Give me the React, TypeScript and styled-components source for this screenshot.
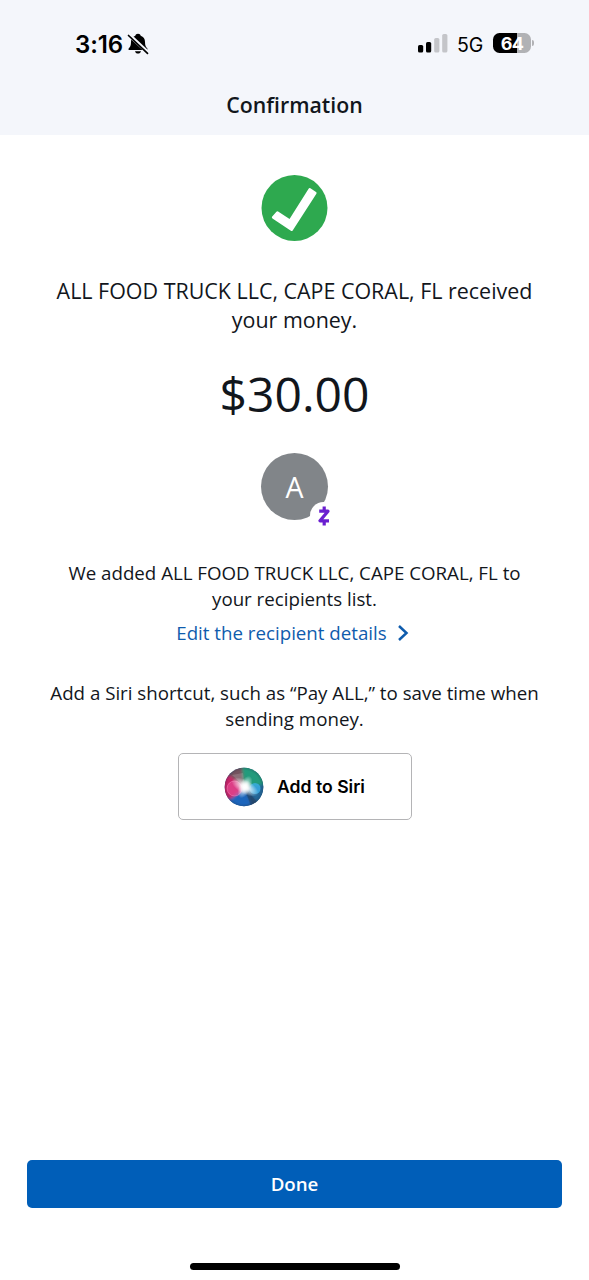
import React from "react";
import styled, { createGlobalStyle } from "styled-components";

const GlobalStyle = createGlobalStyle`
  *, *::before, *::after { box-sizing: border-box; }
  body { margin: 0; background: #fff; }
  button { font: inherit; border: 0; padding: 0; background: none; cursor: pointer; }
  p, h1 { margin: 0; }
  svg { display: block; flex: none; }
`;

const Screen = styled.div`
  width: 589px;
  height: 1280px;
  margin: 0 auto;
  display: flex;
  flex-direction: column;
  overflow: hidden;
  background: #fff;
  color: #12161c;
  font-family: "Open Sans", sans-serif;
`;

const Header = styled.header`
  height: 135px;
  background: #f4f6fb;
  display: flex;
  flex-direction: column;
  flex: none;
`;

const StatusBar = styled.div`
  height: 88px;
  padding: 0 55px 0 75px;
  display: flex;
  align-items: center;
  justify-content: space-between;
  font-family: Inter, sans-serif;
  color: #000;
`;

const StatusGroup = styled.div<{ $gap: number }>`
  display: flex;
  align-items: center;
  gap: ${(p) => p.$gap}px;
`;

const Clock = styled.span`
  font-size: 24px;
  font-weight: 600;
  line-height: 30px;
  letter-spacing: -0.1px;
  padding-top: 1px;
`;

const Network = styled.span`
  font-size: 19.5px;
  line-height: 24px;
  letter-spacing: -0.2px;
  padding: 1px 1px 0 0;
`;

const Battery = styled.div`
  display: flex;
  align-items: center;
  gap: 1px;
  padding-bottom: 2px;
`;

const BatteryBody = styled.div`
  width: 38px;
  height: 20px;
  border-radius: 6.5px;
  background: linear-gradient(to right, #000 64%, #b1b2b5 64%);
  color: #fff;
  font-size: 18px;
  font-weight: 650;
  line-height: 21px;
  letter-spacing: -0.8px;
  text-align: center;
`;

const BatteryTip = styled.div`
  width: 2px;
  height: 6px;
  border-radius: 0 3px 3px 0;
  background: #b1b2b5;
`;

const Title = styled.h1`
  font-size: 21.3px;
  font-weight: 550;
  line-height: 34px;
  text-align: center;
`;

const Content = styled.main`
  flex: 1;
  display: flex;
  flex-direction: column;
  align-items: center;
  padding-top: 40px;
  text-align: center;
`;

const Message = styled.p`
  margin-top: 34px;
  font-size: 21.45px;
  line-height: 29px;
  white-space: nowrap;
`;

const Amount = styled.p`
  margin-top: 27px;
  font-size: 48px;
  line-height: 66px;
`;

const AvatarWrap = styled.div`
  position: relative;
  margin-top: 26px;
  width: 67px;
  height: 67px;
`;

const Avatar = styled.div`
  width: 67px;
  height: 67px;
  border-radius: 50%;
  background: #818589;
  color: #fff;
  font-size: 28.5px;
  line-height: 68px;
`;

const AvatarBadge = styled.div`
  position: absolute;
  left: 49px;
  top: 49px;
  width: 27px;
  height: 27px;
  border-radius: 50%;
  background: #fff;
  display: flex;
  align-items: center;
  justify-content: center;
`;

const Note = styled.p<{ $top: number }>`
  margin-top: ${(p) => p.$top}px;
  font-size: 18.72px;
  line-height: 26px;
  white-space: nowrap;
`;

const EditLink = styled.button`
  margin: 8px 0 0 -4px;
  display: flex;
  align-items: center;
  gap: 10px;
  color: #0f5cad;
  font-size: 18.7px;
  line-height: 26px;
`;

const SiriButton = styled.button`
  margin-top: 21px;
  width: 234px;
  height: 67px;
  border: 1.5px solid #b4b4b6;
  border-radius: 5px;
  display: flex;
  align-items: center;
  justify-content: center;
  gap: 13px;
  color: #000;
  font-family: Inter, sans-serif;
  font-size: 17.6px;
  font-weight: 600;
`;

const Footer = styled.footer`
  flex: none;
  display: flex;
  flex-direction: column;
  align-items: center;
  padding: 0 27px 10.5px;
`;

const DoneButton = styled.button`
  width: 100%;
  height: 48px;
  border-radius: 5px;
  background: #005eb8;
  color: #fff;
  font-size: 18.7px;
  font-weight: 550;
`;

const HomeIndicator = styled.div`
  margin-top: 55px;
  width: 210px;
  height: 7px;
  border-radius: 4px;
  background: #000;
`;

const MutedBell = () => (
  <svg width="22" height="22" viewBox="0 0 22 22">
    <path
      d="M11 .8C9.500 .8 8.500 1.700 8.300 2.800 5.500 3.800 4 6 4 9c0 3.700-.8 4.800-2.200 6.200-.7.8-.3 1.900.7 1.900h17c1 0 1.400-1.100.7-1.900C18.800 13.800 18 12.700 18 9c0-3-1.500-5.200-4.300-6.200-.2-1.100-1.200-2-2.700-2zM8 18.300c.4 1.500 1.500 2.300 3 2.300s2.600-.8 3-2.300z"
      fill="#000"
    />
    <path d="M1.800 1.600 20.800 19.400" stroke="#f4f6fb" strokeWidth="3.600" />
    <path d="M1.500 2.500 20.500 20.300" stroke="#000" strokeWidth="1.700" strokeLinecap="round" />
  </svg>
);

const Signal = () => (
  <svg width="30" height="20" viewBox="0 0 30 20">
    <rect x="0" y="11" width="5.200" height="7.500" rx="1.600" fill="#000" />
    <rect x="8" y="8" width="5.200" height="10.500" rx="1.600" fill="#000" />
    <rect x="16.200" y="4" width="5.200" height="14.500" rx="1.600" fill="#c4c5c9" />
    <rect x="24.200" y="0" width="5.200" height="18.500" rx="1.600" fill="#c4c5c9" />
  </svg>
);

const SuccessMark = () => (
  <svg width="67" height="67" viewBox="0 0 67 67">
    <circle cx="33.500" cy="33" r="33" fill="#2ea94f" />
    <path
      d="M16.400 37.600 29 45.800 48.700 14.400 54.300 18 30.600 54.700 12.200 42.300z"
      fill="#fff"
      stroke="#fff"
      strokeWidth="2.600"
      strokeLinejoin="round"
    />
  </svg>
);

const ZelleMark = () => (
  <svg width="14" height="20" viewBox="0 0 14 20">
    <path
      d="M2.200 5.200H11L3 14.800h9M7.200 .5V5M7.200 15v4.500"
      fill="none"
      stroke="#6a1fd0"
      strokeWidth="3.200"
      strokeLinejoin="round"
    />
  </svg>
);

const Chevron = () => (
  <svg width="12" height="18" viewBox="0 0 12 18">
    <path d="M2 2l7.500 7L2 16" fill="none" stroke="#0f5cad" strokeWidth="2.500" />
  </svg>
);

const SiriOrb = () => (
  <svg width="40" height="40" viewBox="0 0 40 40">
    <defs>
      <clipPath id="orb"><circle cx="20" cy="20" r="19.300" /></clipPath>
      <radialGradient id="glow">
        <stop offset="0" stopColor="#fff" />
        <stop offset=".25" stopColor="#fff" stopOpacity=".85" />
        <stop offset="1" stopColor="#fff" stopOpacity="0" />
      </radialGradient>
      <radialGradient id="rim">
        <stop offset=".85" stopColor="#20304a" stopOpacity="0" />
        <stop offset="1" stopColor="#20304a" stopOpacity=".25" />
      </radialGradient>
      <filter id="soft" x="-30%" y="-30%" width="160%" height="160%">
        <feGaussianBlur stdDeviation="1.500" />
      </filter>
    </defs>
    <g clipPath="url(#orb)">
      <rect width="40" height="40" fill="#2a5277" />
      <g filter="url(#soft)">
        <path d="M20 20 12 2 20-3 43 0v23z" fill="#219b7c" />
        <path d="M20 20 6 8-4 8v25l12 4z" fill="#c92467" />
        <path d="M20 20 5 8 10 0l8 0z" fill="#75535f" />
        <path d="M20 21 8 31-1 34l11 10 18-6z" fill="#1c65bc" />
        <path d="M20 20l23-3-1 14-8 5z" fill="#23679a" />
      </g>
      <circle cx="10.500" cy="21.500" r="7.500" fill="#f05aa4" fillOpacity=".5" stroke="#ff93c8" strokeOpacity=".45" />
      <circle cx="31" cy="21.500" r="5.500" fill="#3eb3ec" fillOpacity=".75" />
      <path d="M20 20 34 36 27 39z" fill="#203c61" fillOpacity=".45" />
      <path d="M21 20 8 8l11-2z" fill="#fff" fillOpacity=".16" />
      <circle cx="20" cy="20" r="19.300" fill="url(#rim)" />
      <ellipse cx="21" cy="20" rx="15" ry="7" fill="url(#glow)" transform="rotate(30 21 20)" />
      <ellipse cx="21" cy="20" rx="12" ry="6" fill="url(#glow)" transform="rotate(-65 21 20)" />
    </g>
  </svg>
);

export default function App() {
  return (
    <>
      <GlobalStyle />
      <Screen>
        <Header>
          <StatusBar>
            <StatusGroup $gap={4}>
              <Clock>3:16</Clock>
              <MutedBell />
            </StatusGroup>
            <StatusGroup $gap={9}>
              <Signal />
              <Network>5G</Network>
              <Battery>
                <BatteryBody>64</BatteryBody>
                <BatteryTip />
              </Battery>
            </StatusGroup>
          </StatusBar>
          <Title>Confirmation</Title>
        </Header>
        <Content>
          <SuccessMark />
          <Message>
            ALL FOOD TRUCK LLC, CAPE CORAL, FL received
            <br />
            your money.
          </Message>
          <Amount>$30.00</Amount>
          <AvatarWrap>
            <Avatar>A</Avatar>
            <AvatarBadge>
              <ZelleMark />
            </AvatarBadge>
          </AvatarWrap>
          <Note $top={40}>
            We added ALL FOOD TRUCK LLC, CAPE CORAL, FL to
            <br />
            your recipients list.
          </Note>
          <EditLink>
            Edit the recipient details
            <Chevron />
          </EditLink>
          <Note $top={34}>
            Add a Siri shortcut, such as “Pay ALL,” to save time when
            <br />
            sending money.
          </Note>
          <SiriButton>
            <SiriOrb />
            Add to Siri
          </SiriButton>
        </Content>
        <Footer>
          <DoneButton>Done</DoneButton>
          <HomeIndicator />
        </Footer>
      </Screen>
    </>
  );
}
